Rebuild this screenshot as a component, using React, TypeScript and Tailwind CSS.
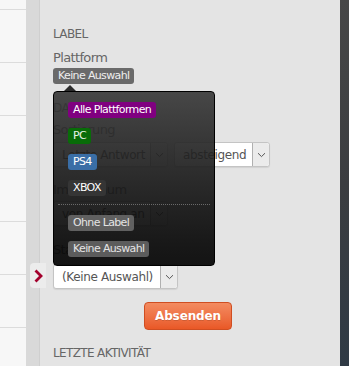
import * as React from 'react'

// Filter form panel with an open "Plattform" label picker

const Chevron = () => (
  <svg width="9" height="6" viewBox="0 0 9 6" fill="none">
    <path d="M1 1.2 L4.5 4.6 L8 1.2" stroke="#555" strokeWidth="1" />
  </svg>
)

function FakeSelect({ text, width }: { text: string; width: string }) {
  return (
    <div
      className={`flex h-[25px] ${width} rounded-[3px] border border-[#c4c4c4] bg-white shadow-[0_1px_1px_rgba(0,0,0,0.08)]`}
    >
      <span className="flex-1 truncate pl-[8px] text-[12px] leading-[24px] tracking-[-0.03em] text-[#555]">{text}</span>
      <span className="flex w-[17px] items-center justify-center rounded-r-[3px] border-l border-[#b0b0b0] bg-[#ebebeb]">
        <Chevron />
      </span>
    </div>
  )
}

function Badge({ label, className }: { label: string; className: string }) {
  return (
    <span
      className={`inline-flex h-[16px] items-center rounded-[3px] px-[5px] text-[11px] leading-[16px] ${className}`}
    >
      {label}
    </span>
  )
}

export default function App() {
  return (
    <div className="relative flex h-[366px] w-[349px] overflow-hidden font-['DejaVu_Sans',sans-serif] tracking-[-0.04em]">
      {/* list column, cut off at the left */}
      <div className="flex w-[26px] flex-col bg-[#f7f7f7]">
        <div className="h-[10px] shrink-0 border-b border-[#dcdcdc]" />
        {Array.from({ length: 7 }).map((_, i) => (
          <div key={i} className="h-[53px] shrink-0 border-b border-[#dcdcdc]" />
        ))}
      </div>
      <div className="w-[14px] border-r border-[#cfcfcf] bg-[#d9d9d9]" />

      {/* filter panel */}
      <div className="flex w-[300px] flex-col bg-[#e4e4e4] pt-[26px] pl-[13px] pr-[17px]">
        <div className="text-[12px] leading-[16px] text-[#666] uppercase">Label</div>
        <div className="mt-[8px] text-[13px] leading-[16px] text-[#666]">Plattform</div>

        <div className="relative mt-[2px] flex">
          <Badge label="Keine Auswahl" className="bg-[#6a6a6a] text-[#eee]" />

          {/* label picker popover */}
          <div className="absolute top-[23px] left-0 z-10 flex h-[175px] w-[162px] flex-col rounded-[4px] border border-black bg-linear-to-b from-[rgba(54,54,54,0.9)] to-[rgba(4,4,4,0.93)] px-[4px] pt-[10px]">
            <div className="absolute -top-[7px] left-[10px] h-0 w-0 border-x-[6px] border-b-[6px] border-x-transparent border-b-[#2c2c2c]" />
            <div className="flex flex-col items-start gap-[10px] pl-[10px]">
              <Badge label="Alle Plattformen" className="bg-[#800080] text-white" />
              <Badge label="PC" className="bg-[#086c08] text-[#e6f3e6]" />
              <Badge label="PS4" className="bg-[#3a6ea6] text-white" />
              <Badge label="XBOX" className="bg-[#353535] text-white" />
            </div>
            <div className="mt-[8px] border-t border-dotted border-[#6a6a6a]" />
            <div className="mt-[10px] flex flex-col items-start gap-[10px] pl-[10px]">
              <Badge label="Ohne Label" className="bg-[#606060] text-[#e4e4e4]" />
              <Badge label="Keine Auswahl" className="bg-[#5c5c5c] text-[#e4e4e4]" />
            </div>
          </div>
        </div>

        <div className="mt-[16px] text-[12px] leading-[16px] text-[#666] uppercase">Darstellung</div>
        <div className="mt-[6px] text-[13px] leading-[16px] text-[#666]">Sortierung</div>
        <div className="mt-[4px] flex gap-[6px]">
          <FakeSelect text="Letzte Antwort" width="w-[115px]" />
          <FakeSelect text="absteigend" width="w-[96px]" />
        </div>

        <div className="mt-[15px] text-[13px] leading-[16px] text-[#666]">Im Zeitraum</div>
        <div className="mt-[3px] flex">
          <FakeSelect text="von Anfang an" width="w-[115px]" />
        </div>

        <div className="mt-[16px] text-[13px] leading-[16px] text-[#666]">Status</div>
        <div className="mt-[6px] flex">
          <FakeSelect text="(Keine Auswahl)" width="w-[125px]" />
        </div>

        <div className="mt-[13px] flex justify-center">
          <button className="h-[28px] w-[88px] rounded-[4px] border border-[#cf4e22] bg-linear-to-b from-[#f38b60] to-[#e95826] text-[12px] font-bold tracking-[-0.01em] text-white [text-shadow:0_1px_0_rgba(0,0,0,0.15)]">
            Absenden
          </button>
        </div>

        <div className="mt-[15px] text-[12px] leading-[16px] text-[#666] uppercase">Letzte Aktivität</div>
      </div>

      {/* page background at the right edge */}
      <div className="w-[9px] bg-linear-to-b from-[#474747] via-[#3b3d40] to-[#2f3a45]" />

      {/* collapse tab on the panel edge */}
      <div className="absolute top-[263px] left-[30px] flex h-[25px] w-[16px] items-center justify-center rounded-l-[4px] bg-[#ececec]">
        <svg width="9" height="14" viewBox="0 0 9 14" fill="none">
          <path d="M1.5 1.5 L7 7 L1.5 12.5" stroke="#a3002c" strokeWidth="2.8" />
        </svg>
      </div>
    </div>
  )
}
